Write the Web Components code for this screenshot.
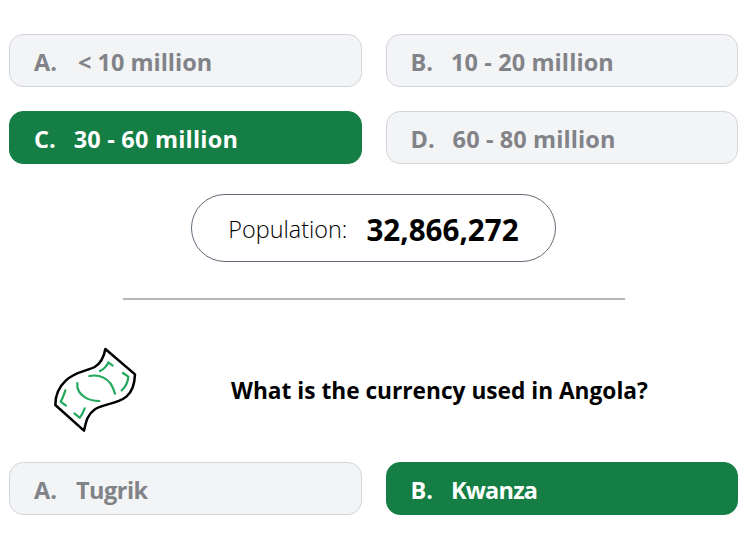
<!DOCTYPE html>
<html lang="en"><head><meta charset="utf-8"><title>Quiz</title>
<style>html,body{margin:0;background:#fff}body{font-family:"Open Sans","Noto Sans","Liberation Sans",sans-serif}</style>
</head><body>
<quiz-page>
  <answer-grid>
    <answer-option letter="A." gap="21">&lt; 10 million</answer-option>
    <answer-option letter="B." gap="18" track="0.1">10 - 20 million</answer-option>
    <answer-option letter="C." gap="18" track="0.2" selected>30 - 60 million</answer-option>
    <answer-option letter="D." gap="18" track="0.1">60 - 80 million</answer-option>
  </answer-grid>
  <population-pill label="Population:" value="32,866,272"></population-pill>
  <section-rule></section-rule>
  <question-row text="What is the currency used in Angola?"></question-row>
  <answer-grid>
    <answer-option letter="A." gap="19" track="-0.5">Tugrik</answer-option>
    <answer-option letter="B." gap="18" track="-0.8" selected>Kwanza</answer-option>
  </answer-grid>
</quiz-page>
<script>
function def(name, css, html, init){
  customElements.define(name, class extends HTMLElement{
    constructor(){super();const s=this.attachShadow({mode:'open'});
      s.innerHTML='<style>'+css+'</style>'+(typeof html==='function'?html(this):html);}
    connectedCallback(){
      if(init) init(this);
    }
  });
}
def('quiz-page',':host{display:flex;flex-direction:column;padding:34px 11px 0 9px;width:729px;height:502px}','<slot></slot>');
def('answer-grid',':host{display:grid;grid-template-columns:1fr 1fr;column-gap:24px;row-gap:24px}','<slot></slot>');
def('answer-option',`:host{display:flex;align-items:center;box-sizing:border-box;height:53px;padding:4px 24px 0;border:1px solid #d1d5db;border-radius:14px;background:#f3f4f6;color:#818388;font-size:23.5px;font-weight:700;line-height:1;white-space:nowrap}
:host([selected]){background:#147e44;border-color:#147e44;color:#fff}
b{font-weight:inherit;letter-spacing:0}`,'<b id="l"></b><slot></slot>',el=>{
  const l=el.shadowRoot.getElementById('l');l.textContent=el.getAttribute('letter');l.style.marginRight=el.getAttribute('gap')+'px';
  if(el.hasAttribute('track')) el.style.letterSpacing=el.getAttribute('track')+'px';
});
def('population-pill',`:host{display:flex;align-items:center;justify-content:center;align-self:center;box-sizing:border-box;width:365px;height:68px;margin-top:30px;padding-top:2px;border:1px solid #5f6b76;border-radius:34px;color:#000;white-space:nowrap}
.l{font-size:23.4px;font-weight:300;margin-right:19px}.v{font-size:29.6px;font-weight:700}`,'<span class="l"></span><span class="v"></span>',el=>{
  el.shadowRoot.querySelector('.l').textContent=el.getAttribute('label');
  el.shadowRoot.querySelector('.v').textContent=el.getAttribute('value');
});
def('section-rule',':host{display:block;align-self:center;width:502px;height:2px;margin-top:36px;background:#b4b6b8}','');
def('question-row',`:host{display:flex;align-items:center;height:90px;margin-top:45px;margin-bottom:27px;color:#000}
svg{width:90px;height:90px;margin-left:41px;flex:none}
p{margin:0 0 0 91px;font-size:22.7px;font-weight:700;white-space:nowrap}`,
`<svg viewBox="60 30 270 270" fill="none" stroke-linecap="round" stroke-linejoin="round">
<path stroke="#000" stroke-width="7.5" d="M226 42C222 66 214 84 194 96C170 108 136 110 108 136C86 156 76 180 76 210L162 287C168 262 170 240 196 222C224 205 262 208 290 184C306 170 314 146 315 118Z"/>
<g stroke="#22a85c" stroke-width="6.5">
<path d="M210 108C222 102 230 94 235 82L248 92"/>
<path d="M178 123C206 118 228 128 242 146C248 156 252 166 255 176"/>
<path d="M142 144C140 162 150 178 166 188C180 196 194 198 208 198"/>
<path d="M279 114L295 125C294 140 286 156 275 166"/>
<path d="M106 166C102 178 98 190 92 200L108 212"/>
<path d="M133 235L149 248C156 240 160 230 164 220"/>
</g></svg><p></p>`,el=>{el.shadowRoot.querySelector('p').textContent=el.getAttribute('text')});
</script>
</body></html>
